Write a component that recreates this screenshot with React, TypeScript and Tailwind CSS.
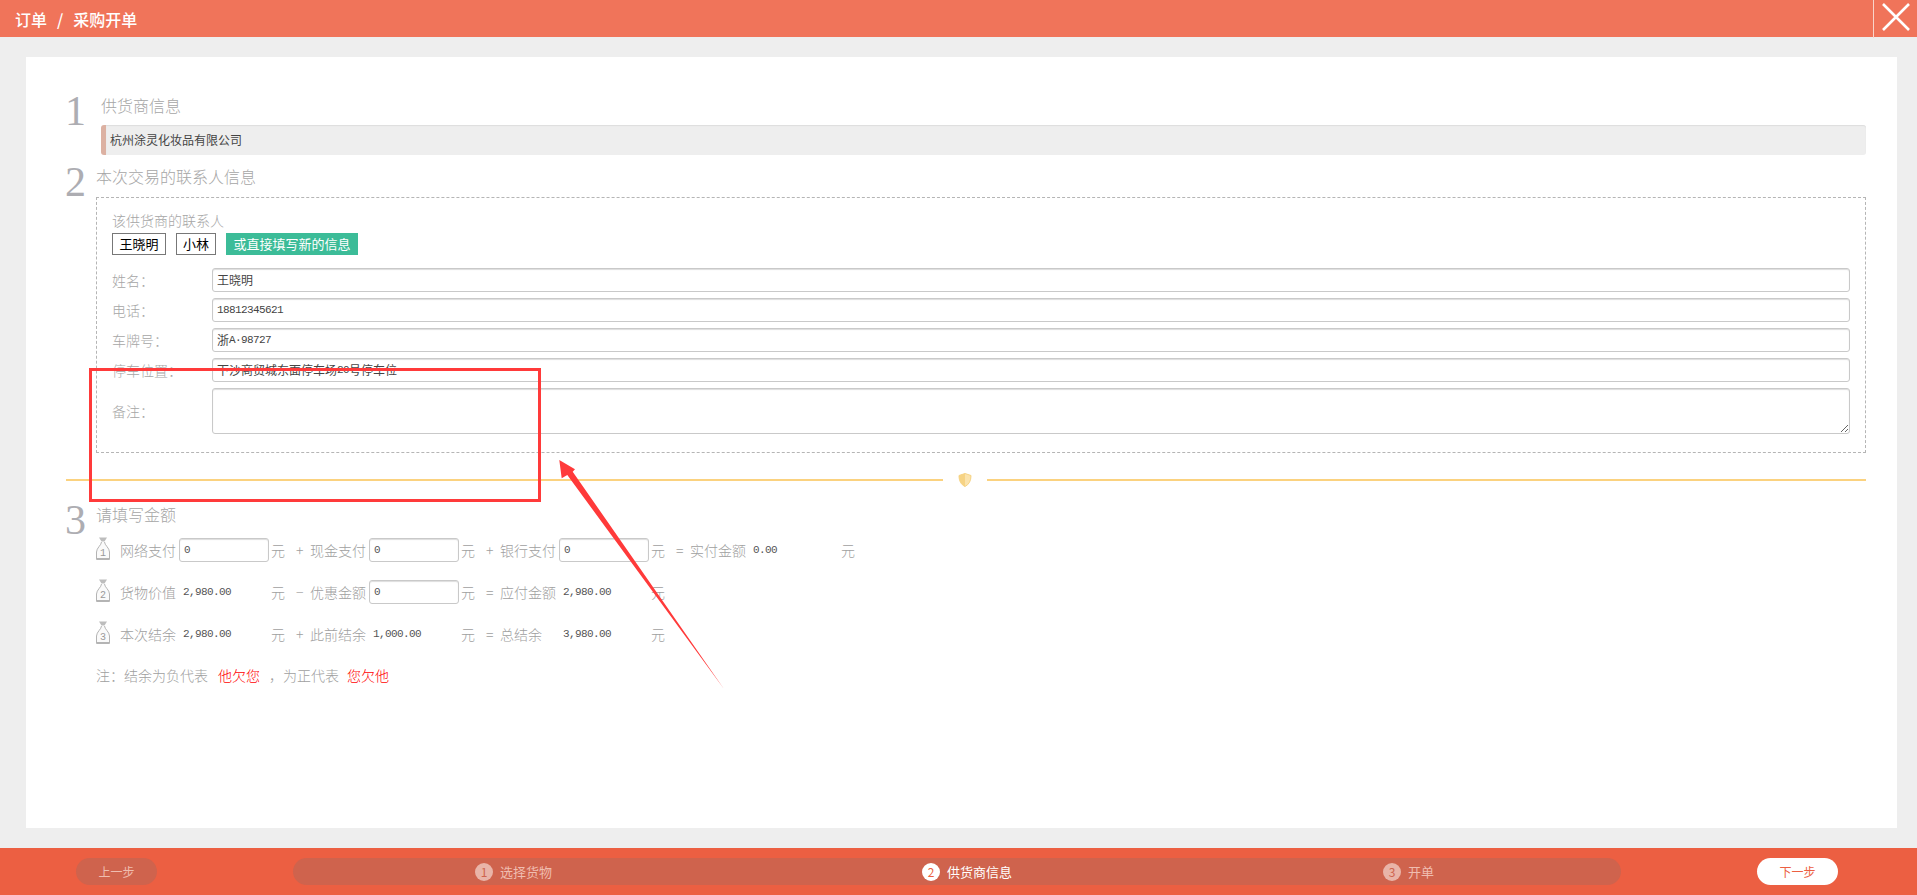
import React from 'react'

const cjk = "font-['Noto_Sans_CJK_SC',sans-serif]"
const num = "font-['Liberation_Mono','Noto_Sans_CJK_SC',monospace] text-[11px] tracking-[-0.6px]"

function StepNumber({ n }: { n: number }) {
  return (
    <div className="w-[35px] shrink-0 h-0">
      <span className="block -mt-[3px] -ml-[1px] font-['Liberation_Serif',serif] text-[42px] leading-[40px] text-[#adadb2]">{n}</span>
    </div>
  )
}

function Title({ children }: { children: React.ReactNode }) {
  return <div className="h-6 leading-[22px] text-base font-light text-[#a6a6a6]">{children}</div>
}

function Bag({ n }: { n: number }) {
  return (
    <svg width="14" height="23" viewBox="0 0 14 23" className="shrink-0 -mt-[3px]">
      <path d="M3 0.5 L11 0.5 L8.5 4.5 L5.5 4.5 Z" fill="#bdbdbd" />
      <path d="M5.5 5 C5.5 8 0.5 11 0.5 15 L0.5 22.5 L13.5 22.5 L13.5 15 C13.5 11 8.5 8 8.5 5" fill="#fafafa" stroke="#b4b4b4" />
      <path d="M0.5 21.5 L13.5 21.5" stroke="#b4b4b4" />
      <text x="7" y="19" textAnchor="middle" fontSize="10" fill="#999" fontFamily="Liberation Mono">{n}</text>
    </svg>
  )
}

function Field({ children }: { children: React.ReactNode }) {
  return (
    <div className="flex-1 h-6 px-1 flex items-center rounded-[3px] border border-[#c9c9c9] shadow-[inset_0_1px_1px_#ddd] text-xs text-[#444] bg-white whitespace-pre">
      {children}
    </div>
  )
}

function FormRow({ label, children }: { label: string; children: React.ReactNode }) {
  return (
    <div className="flex items-center">
      <div className="w-[100px] shrink-0 text-sm font-light text-[#a6a6a6]">{label}</div>
      {children}
    </div>
  )
}

function AmountLabel({ op, label }: { op?: string; label: string }) {
  return (
    <>
      {op && <span className="w-[14px] shrink-0 text-sm font-light text-[#a0a0a0]">{op}</span>}
      <span className="w-[59px] shrink-0 text-sm font-light text-[#a0a0a0]">{label}</span>
    </>
  )
}

function AmountInput() {
  return (
    <input
      readOnly
      value="0"
      className={`w-[90px] h-6 px-1 rounded-[3px] border border-[#c9c9c9] shadow-[inset_0_1px_1px_#ddd] text-[#555] outline-none ${num}`}
    />
  )
}

function AmountValue({ children }: { children: string }) {
  return <span className={`w-[90px] pl-1 text-[#555] ${num}`}>{children}</span>
}

function Yuan() {
  return <span className="w-[27px] shrink-0 pl-[2px] text-sm font-light text-[#a0a0a0]">元</span>
}

export default function App() {
  return (
    <div className={`relative h-[895px] flex flex-col overflow-hidden bg-[#eeeeee] ${cjk}`}>
      {/* Header */}
      <header className="h-[37px] shrink-0 flex items-center bg-[#f0745a] text-white">
        <div className="pl-[15px] text-base font-medium flex">
          <span>订单</span>
          <span className="ml-[10px]">/</span>
          <span className="ml-[10px]">采购开单</span>
        </div>
        <button className="ml-auto w-[44px] h-[38px] self-start border-l border-[#f9d5cb] flex items-start pl-[8px] pt-[3px]">
          <svg width="28" height="28" viewBox="0 0 28 28" stroke="#fff" strokeWidth="2.6">
            <path d="M1 1 L27 27 M27 1 L1 27" />
          </svg>
        </button>
      </header>

      {/* Card */}
      <main className="flex-1 pt-5 pb-5 pl-[26px] pr-5">
        <div className="h-full bg-white pt-[37px] pl-[40px] pr-[31px]">
          <section className="flex">
            <StepNumber n={1} />
            <div className="flex-1">
              <Title>供货商信息</Title>
              <div className="mt-[7px] h-[30px] pl-1 flex items-center rounded-[3px] border-l-[5px] border-[#dcb1a2] bg-[#eeeeee] shadow-[inset_0_1px_1px_#ddd] text-xs text-[#444]">
                杭州涂灵化妆品有限公司
              </div>
            </div>
          </section>

          <section className="flex mt-[10px]">
            <div className="w-[30px] shrink-0">
              <StepNumber n={2} />
            </div>
            <div className="flex-1">
              <Title>本次交易的联系人信息</Title>
              <div className="mt-2 pt-3 pb-[18px] pl-[15px] pr-[15px] border border-dashed border-[#b5b5b5]">
                <div className="h-5 leading-5 text-sm font-light text-[#a6a6a6]">该供货商的联系人</div>
                <div className="mt-[3px] flex items-center h-[22px] text-[13px]">
                  <button className="h-full w-[54px] border border-[#777] text-black">王晓明</button>
                  <button className="h-full w-[40px] ml-[10px] border border-[#777] text-black">小林</button>
                  <button className="h-full w-[132px] ml-[10px] bg-[#3cbc98] text-white">或直接填写新的信息</button>
                </div>
                <div className="mt-[13px] flex flex-col gap-[6px]">
                  <FormRow label="姓名：">
                    <Field>王晓明</Field>
                  </FormRow>
                  <FormRow label="电话：">
                    <Field><span className={num}>18812345621</span></Field>
                  </FormRow>
                  <FormRow label="车牌号：">
                    <Field>浙<span className={num}>A·98727</span></Field>
                  </FormRow>
                  <FormRow label="停车位置：">
                    <Field>下沙商贸城东面停车场<span className={num}>20</span>号停车位</Field>
                  </FormRow>
                  <FormRow label="备注：">
                    <textarea readOnly className="flex-1 h-[46px] rounded-[3px] border border-[#c9c9c9] shadow-[inset_0_1px_1px_#ddd] outline-none" />
                  </FormRow>
                </div>
              </div>
            </div>
          </section>

          {/* Divider */}
          <div className="mt-[20px] h-[14px] flex items-center">
            <div className="flex-1 h-[2px] bg-[#fbd27f]" />
            <svg width="14" height="14" viewBox="0 0 14 14" className="mx-[15px]">
              <path d="M7 0.5 L13 2.5 C13 8 11 11.5 7 13.5 C3 11.5 1 8 1 2.5 Z" fill="#fbe3ac" stroke="#f6d384" />
              <path d="M7 0.5 L1 2.5 C1 8 3 11.5 7 13.5 Z" fill="#f6d384" />
            </svg>
            <div className="w-[879px] h-[2px] bg-[#fbd27f]" />
          </div>

          <section className="flex mt-[16px]">
            <div className="w-[30px] shrink-0">
              <StepNumber n={3} />
            </div>
            <div className="flex-1">
              <Title>请填写金额</Title>
              <div className="mt-[11px] flex items-center h-6">
                <span className="w-[24px] shrink-0"><Bag n={1} /></span>
                <AmountLabel label="网络支付" />
                <AmountInput />
                <Yuan />
                <AmountLabel op="+" label="现金支付" />
                <AmountInput />
                <Yuan />
                <AmountLabel op="+" label="银行支付" />
                <AmountInput />
                <Yuan />
                <AmountLabel op="=" label="实付金额" />
                <AmountValue>0.00</AmountValue>
                <Yuan />
              </div>
              <div className="mt-[18px] flex items-center h-6">
                <span className="w-[24px] shrink-0"><Bag n={2} /></span>
                <AmountLabel label="货物价值" />
                <AmountValue>2,980.00</AmountValue>
                <Yuan />
                <AmountLabel op="−" label="优惠金额" />
                <AmountInput />
                <Yuan />
                <AmountLabel op="=" label="应付金额" />
                <AmountValue>2,980.00</AmountValue>
                <Yuan />
              </div>
              <div className="mt-[18px] flex items-center h-6">
                <span className="w-[24px] shrink-0"><Bag n={3} /></span>
                <AmountLabel label="本次结余" />
                <AmountValue>2,980.00</AmountValue>
                <Yuan />
                <AmountLabel op="+" label="此前结余" />
                <AmountValue>1,000.00</AmountValue>
                <Yuan />
                <AmountLabel op="=" label="总结余" />
                <AmountValue>3,980.00</AmountValue>
                <Yuan />
              </div>
              <div className="mt-[19px] h-5 leading-5 text-sm font-light text-[#a0a0a0] whitespace-pre">
                注：结余为负代表<span className="ml-[10px] text-[#ff0000]">他欠您</span>
                <span className="ml-[9px]">，为正代表</span>
                <span className="ml-2 text-[#ff0000]">您欠他</span>
              </div>
            </div>
          </section>
        </div>
      </main>

      {/* Footer */}
      <footer className="h-[47px] shrink-0 flex items-center bg-[#ec5f42] text-xs">
        <button className="ml-[76px] w-[81px] h-[27px] rounded-full bg-[#cf634d] text-[#efbdb0]">上一步</button>
        <div className="ml-[136px] w-[1328px] h-[27px] rounded-full bg-[#cf634d] flex items-center pl-[182px] text-[13px]">
          <div className="w-[447px] flex items-center text-[#efbdb0]">
            <span className="w-[18px] h-[18px] mr-[7px] rounded-full bg-[#e9b4a8] text-[#cf634d] flex items-center justify-center text-xs">1</span>
            选择货物
          </div>
          <div className="w-[461px] flex items-center text-white">
            <span className="w-[18px] h-[18px] mr-[7px] rounded-full bg-white text-[#ec5f42] flex items-center justify-center text-xs">2</span>
            供货商信息
          </div>
          <div className="flex items-center text-[#efbdb0]">
            <span className="w-[18px] h-[18px] mr-[7px] rounded-full bg-[#e9b4a8] text-[#cf634d] flex items-center justify-center text-xs">3</span>
            开单
          </div>
        </div>
        <button className="ml-[136px] w-[81px] h-[27px] rounded-full bg-white text-[#ec5f42]">下一步</button>
      </footer>

      {/* Annotation drawn over the screenshot */}
      <div className="absolute left-[89px] top-[368px] w-[452px] h-[134px] border-[3px] border-[#ff3a3a]" />
      <svg className="absolute left-0 top-0 pointer-events-none" width="1917" height="895">
        <polygon points="559.3,460 575,469.3 572.7,471.7 724,689 567.3,475 561.7,478.3" fill="#ff3a3a" />
      </svg>
    </div>
  )
}
